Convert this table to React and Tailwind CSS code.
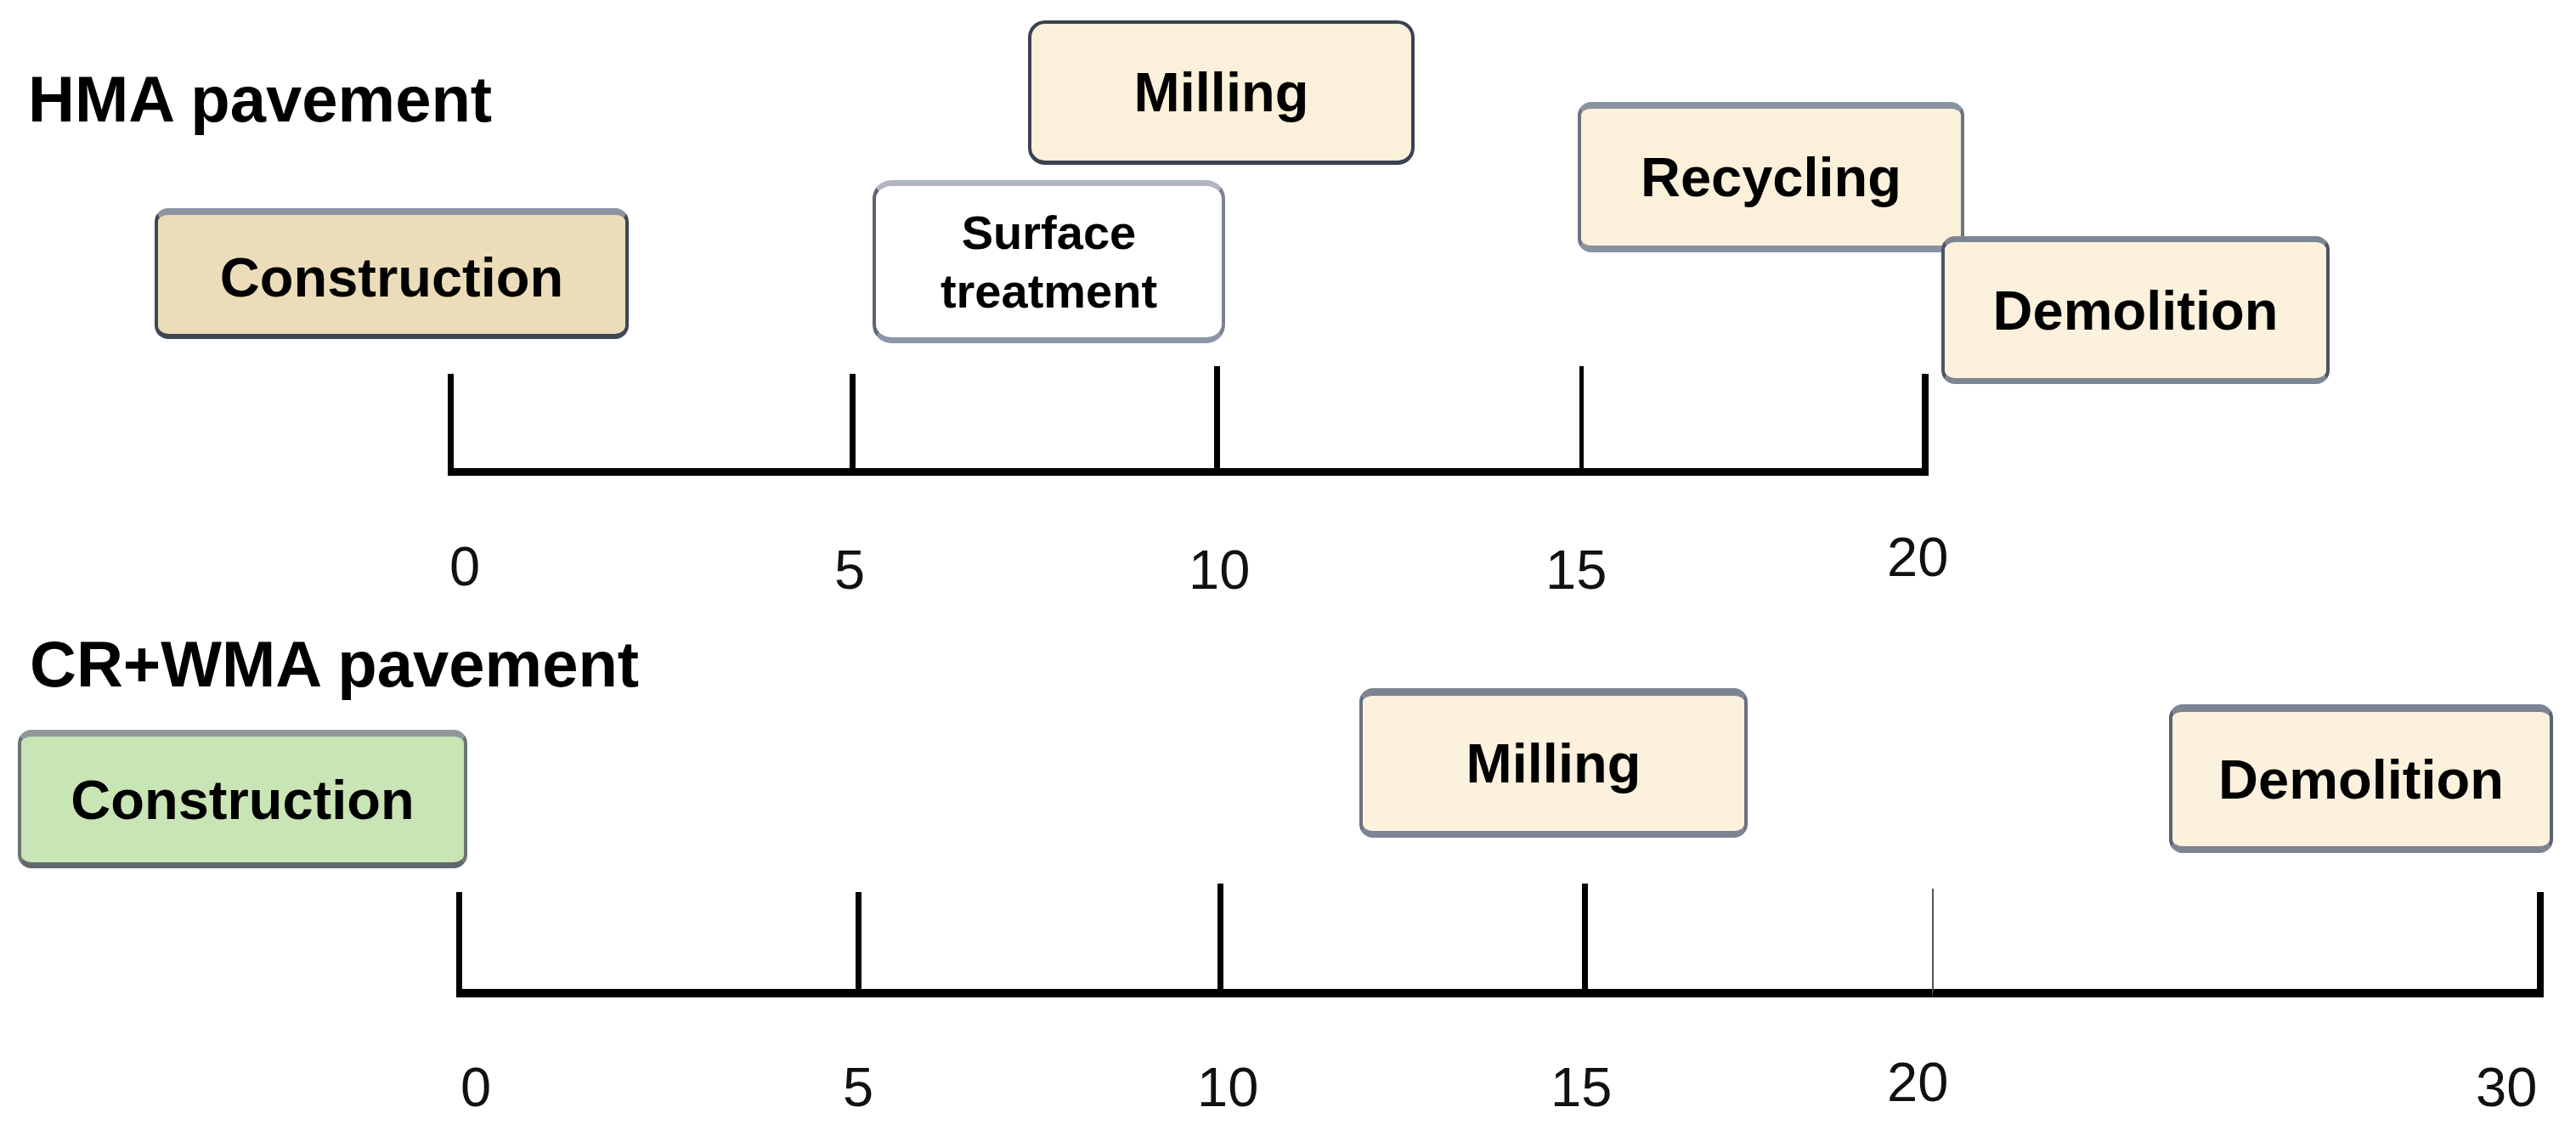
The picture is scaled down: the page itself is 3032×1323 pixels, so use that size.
import React from 'react';

const font = { fontFamily: '"Liberation Sans", Arial, sans-serif' };

// diagram node on the timeline canvas
const Box = ({ className = '', children }) => (
  <div
    className={`absolute flex items-center justify-center rounded-[16px] border-[4px] text-center font-bold text-black ${className}`}
  >
    {children}
  </div>
);

const Label = ({ className = '', children }) => (
  <div className={`shrink-0 text-[65px] leading-none text-[#111] ${className}`}>{children}</div>
);

const App = () => {
  return (
    <div className="flex w-[3032px] h-[1323px] flex-col overflow-hidden bg-white" style={font}>
      {/* HMA */}
      <section className="relative flex h-[720px] shrink-0 flex-col pt-[79px]">
        <h2 className="ml-[33px] text-[76px] font-bold leading-none text-black">HMA pavement</h2>

        <Box className="left-[182px] top-[245px] w-[558px] h-[154px] bg-[#ecdcb9] border-[#3f4656] border-t-[#8c93a3] border-t-[8px] border-b-[6px] text-[65px] leading-none pt-[6px]">
          Construction
        </Box>
        <Box className="left-[1027px] top-[212px] w-[415px] h-[192px] bg-white border-[3px] border-[#7b8294] border-l-[#5d6472] border-t-[#b0b5bf] border-t-[7px] border-b-[#8d95a8] border-b-[7px] rounded-[22px] text-[56px] leading-[69px]">
          Surface
          <br />
          treatment
        </Box>
        <Box className="left-[1210px] top-[24px] w-[455px] h-[170px] bg-[#fbf0da] border-[3px] border-[#3a4150] border-b-[5px] rounded-[20px] text-[65px] leading-none">
          Milling
        </Box>
        <Box className="left-[1857px] top-[120px] w-[455px] h-[177px] bg-[#fbf0da] border-[#6c7383] border-t-[#8a91a1] border-t-[8px] border-b-[#8a91a1] border-b-[8px] text-[65px] leading-none">
          Recycling
        </Box>
        <Box className="left-[2285px] top-[278px] w-[457px] h-[174px] bg-[#fcf1dc] border-[#4d5464] border-t-[#7e8595] border-t-[7px] border-b-[#7e8595] border-b-[7px] text-[65px] leading-none">
          Demolition
        </Box>

        {/* axis: each segment draws its left tick and the base line */}
        <div className="ml-[527px] mt-[276px] flex items-end">
          <div className="h-[120px] w-[473px] border-b-[9px] border-l-[7px] border-black" />
          <div className="h-[120px] w-[429px] border-b-[9px] border-l-[7px] border-black" />
          <div className="h-[129px] w-[430px] border-b-[9px] border-l-[7px] border-black" />
          <div className="h-[129px] w-[403px] border-b-[9px] border-l-[5px] border-black" />
          <div className="h-[120px] w-[8px] bg-black" />
        </div>

        <div className="ml-[529px] mt-[63px] flex items-start">
          <Label className="w-[453px] mt-[11px]">0</Label>
          <Label className="w-[417px] mt-[15px]">5</Label>
          <Label className="w-[420px] mt-[15px]">10</Label>
          <Label className="w-[402px] mt-[15px]">15</Label>
          <Label>20</Label>
        </div>
      </section>

      {/* CR+WMA */}
      <section className="relative flex flex-1 flex-col pt-[24px]">
        <h2 className="ml-[35px] text-[76px] font-bold leading-none text-black">CR+WMA pavement</h2>

        <Box className="left-[21px] top-[139px] w-[529px] h-[163px] bg-[#c9e4b5] border-[#6b7478] border-t-[#8f979b] border-t-[8px] border-b-[#5e676b] border-b-[7px] text-[65px] leading-none">
          Construction
        </Box>
        <Box className="left-[1600px] top-[90px] w-[457px] h-[176px] bg-[#fcf1dc] border-[#6a7282] border-t-[#7d8494] border-t-[9px] border-b-[#7d8494] border-b-[8px] text-[65px] leading-none">
          Milling
        </Box>
        <Box className="left-[2553px] top-[109px] w-[452px] h-[175px] bg-[#fcf1dc] border-[#5c6373] border-t-[#7d8494] border-t-[9px] border-b-[#7d8494] border-b-[8px] text-[65px] leading-none">
          Demolition
        </Box>

        <div className="ml-[537px] mt-[220px] flex items-end">
          <div className="h-[124px] w-[470px] border-b-[10px] border-l-[7px] border-black" />
          <div className="h-[124px] w-[426px] border-b-[10px] border-l-[7px] border-black" />
          <div className="h-[134px] w-[429px] border-b-[10px] border-l-[7px] border-black" />
          <div className="h-[134px] w-[412px] border-b-[10px] border-l-[7px] border-black" />
          <div className="h-[128px] w-[712px] border-b-[10px] border-l-[2px] border-black border-l-[#555]" />
          <div className="h-[124px] w-[8px] bg-black" />
        </div>

        <div className="ml-[542px] mt-[67px] flex items-start">
          <Label className="w-[450px] mt-[6px]">0</Label>
          <Label className="w-[417px] mt-[6px]">5</Label>
          <Label className="w-[416px] mt-[6px]">10</Label>
          <Label className="w-[396px] mt-[6px]">15</Label>
          <Label className="w-[693px]">20</Label>
          <Label className="mt-[6px]">30</Label>
        </div>
      </section>
    </div>
  );
};

export default App;
